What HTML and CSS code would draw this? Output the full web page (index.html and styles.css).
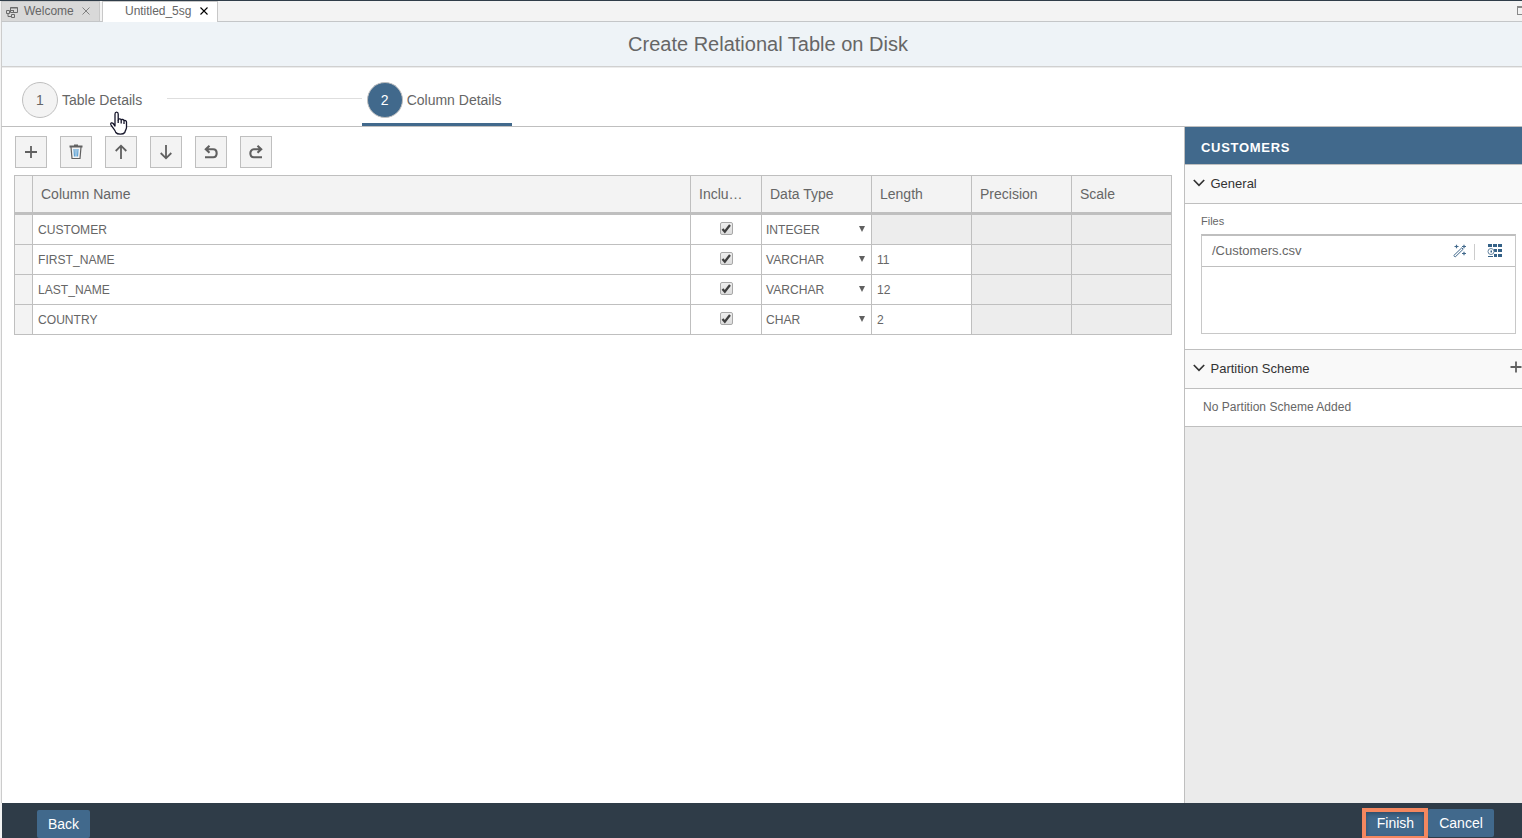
FILE: index.html
```html
<!DOCTYPE html>
<html lang="en">
<head>
<meta charset="utf-8">
<title>Create Relational Table on Disk</title>
<link rel="stylesheet" href="styles.css">
</head>
<body>
<div class="app">
  <nav class="tabs">
    <div class="tab tab-welcome">
      <svg class="tab-icon" width="12" height="12" viewBox="0 0 12 12" fill="none" stroke="#6a6a6a"><path d="M4.500 1.500h7v5h-7zM4.500 2h7M.5 4.500h3v3h-3zM5.500 8.500h3v3h-3zM7.500 4v3M2 8v2.500h3M4 4.500h3.500"/></svg>
      <span class="tab-label">Welcome</span>
      <svg class="tab-close" width="8" height="8" viewBox="0 0 8 8" stroke="#777" stroke-width=".9"><path d="M.5.5l7 7M7.500.5l-7 7"/></svg>
    </div>
    <div class="tab tab-active">
      <span class="tab-label">Untitled_5sg</span>
      <svg class="tab-close" width="8" height="8" viewBox="0 0 8 8" stroke="#000" stroke-width="1.100"><path d="M.5.5l7 7M7.500.5l-7 7"/></svg>
    </div>
    <span class="maximize"></span>
  </nav>
  <header class="title">Create Relational Table on Disk</header>
  <div class="stepper">
    <div class="step"><span class="circle">1</span><span>Table Details</span></div>
    <span class="connector"></span>
    <div class="step step-active"><span class="circle">2</span><span>Column Details</span></div>
    <svg class="pointer" width="20" height="25" viewBox="0 0 20 25" fill="#fff" stroke="#15152a" stroke-width="1.300" stroke-linejoin="round"><path d="M6 15V3c0-2.600 3.200-2.600 3.200 0v6c.2-1.700 3-1.600 3 .3 .4-1.300 2.800-1.100 2.800.8 .6-1 2.500-.6 2.500 1v5.400c0 2-1.500 3-1.700 5-1.700 2.300-7.300 2.200-9 0-.4-2.300-3.700-5.200-4.900-7.800-.8-1.900 1.200-2.300 2.300-1.200z"/><path d="M9.200 9v3M12.200 9.500v3M15 10.500v2.500"/></svg>
  </div>
  <div class="content">
    <main class="editor">
      <div class="toolbar">
        <button class="tool"><svg width="16" height="16" viewBox="0 0 16 16"><path d="M8 2v12M2 8h12"/></svg></button>
        <button class="tool"><svg width="16" height="16" viewBox="0 0 16 16"><path d="M1.500 2.500h13M6 1.300h4"/><path class="thin" d="M3 3l1 11.500h8L13 3"/><path class="thin blue" d="M6 5l.5 7.500M8 5v7.500M10 5l-.5 7.500"/></svg></button>
        <button class="tool"><svg width="16" height="16" viewBox="0 0 16 16"><path d="M8 15V2M2.700 7l5.300-5.300L13.300 7"/></svg></button>
        <button class="tool"><svg width="16" height="16" viewBox="0 0 16 16"><path d="M8 1v13M2.700 9l5.300 5.300L13.300 9"/></svg></button>
        <button class="tool"><svg width="16" height="16" viewBox="0 0 16 16"><path class="bold" d="M6.500 1.800L2.800 5.300l3.700 3.500M3 5.300h7.200c4.600 0 4.600 7.900 0 7.900H2"/></svg></button>
        <button class="tool"><svg width="16" height="16" viewBox="0 0 16 16"><path class="bold" d="M9.500 1.800l3.700 3.500-3.700 3.500M13 5.300H5.800c-4.600 0-4.600 7.900 0 7.900H14"/></svg></button>
      </div>
      <div class="grid">
        <div class="row head"><span></span><span>Column Name</span><span>Inclu…</span><span>Data Type</span><span>Length</span><span>Precision</span><span>Scale</span></div>
        <div class="row"><span class="handle"></span><span>CUSTOMER</span><span class="include"><i class="check"><svg width="11" height="11" viewBox="0 0 11 11"><path d="M1.500 6l2.300 2.700L9 2"/></svg></i></span><span class="type">INTEGER<i class="arrow"></i></span><span class="off"></span><span class="off"></span><span class="off"></span></div>
        <div class="row"><span class="handle"></span><span>FIRST_NAME</span><span class="include"><i class="check"><svg width="11" height="11" viewBox="0 0 11 11"><path d="M1.500 6l2.300 2.700L9 2"/></svg></i></span><span class="type">VARCHAR<i class="arrow"></i></span><span>11</span><span class="off"></span><span class="off"></span></div>
        <div class="row"><span class="handle"></span><span>LAST_NAME</span><span class="include"><i class="check"><svg width="11" height="11" viewBox="0 0 11 11"><path d="M1.500 6l2.300 2.700L9 2"/></svg></i></span><span class="type">VARCHAR<i class="arrow"></i></span><span>12</span><span class="off"></span><span class="off"></span></div>
        <div class="row"><span class="handle"></span><span>COUNTRY</span><span class="include"><i class="check"><svg width="11" height="11" viewBox="0 0 11 11"><path d="M1.500 6l2.300 2.700L9 2"/></svg></i></span><span class="type">CHAR<i class="arrow"></i></span><span>2</span><span class="off"></span><span class="off"></span></div>
      </div>
    </main>
    <aside class="panel">
      <h2 class="panel-title">CUSTOMERS</h2>
      <div class="section"><svg class="chevron" width="12" height="8" viewBox="0 0 12 8"><path d="M.8 1L6 6.300 11.200 1"/></svg>General</div>
      <div class="general">
        <div class="label">Files</div>
        <div class="files">
          <div class="file">
            <span class="file-name">/Customers.csv</span>
            <svg class="wand" width="14" height="14" viewBox="0 0 14 14" fill="none" stroke="#41698c"><path d="M.8 11.500L8.800 3.800l1.400 1.400L2.200 13z"/><path stroke-width="1.200" d="M1.500 2.500h4M3.500.7v3.600M9 2.500h4M11 .7v3.600M9 9.500h4M11 7.700v3.600"/></svg>
            <span class="divider"></span>
            <svg width="15" height="14" viewBox="0 0 15 14" fill="#346187"><path d="M1 0h4v3H1zM6 0h4v3H6zM11 0h4v3h-4zM11 5h4v3h-4zM11 10h4v3h-4zM7 5h3v3H7zM7 10h3v3H7z"/><circle cx="4" cy="7.500" r="3" fill="#fff" stroke="#6685a0"/><path d="M3.500 6.500h1.500v2H3.500zM1 12h5v1H1z"/></svg>
          </div>
        </div>
      </div>
      <div class="section"><svg class="chevron" width="12" height="8" viewBox="0 0 12 8"><path d="M.8 1L6 6.300 11.200 1"/></svg>Partition Scheme<svg class="add" width="12" height="12" viewBox="0 0 12 12"><path d="M6 .5v11M.5 6h11"/></svg></div>
      <div class="empty">No Partition Scheme Added</div>
    </aside>
  </div>
  <footer class="footer">
    <button class="action back">Back</button>
    <div class="highlight"><button class="action finish">Finish</button></div>
    <button class="action cancel">Cancel</button>
  </footer>
</div>
</body>
</html>
```

FILE: styles.css
```css
* { box-sizing: border-box; }
body { margin: 0; background: #f3f3f3; color: #666; font-family: "Liberation Sans", Arial, sans-serif; overflow: hidden; }
button { font-family: inherit; padding: 0; }
svg { display: block; flex: none; }
.app { width: 1522px; height: 838px; display: flex; flex-direction: column; border-top: 1px solid #2f3c48; padding-left: 1px; overflow: hidden; }
.tabs { height: 21px; flex: none; display: flex; border-bottom: 1px solid #c4c6c8; border-left: 1px solid #ccc; background: #f3f3f3; }
.tab { height: 20px; display: flex; align-items: center; font-size: 12px; border-top: 1px solid #c8c8c8; border-right: 1px solid #c8c8c8; }
.tab-label { line-height: 18px; padding-bottom: 1px; }
.tab-close { margin-bottom: 2px; }
.tab-welcome { width: 98px; padding-left: 4px; background: #d9d9d9; }
.tab-welcome .tab-label { margin-left: 6px; width: 58px; }
.tab-active { width: 116px; height: 21px; margin-left: 2px; padding: 0 0 1px 22px; background: #fff; border-left: 1px solid #c8c8c8; }
.tab-active .tab-label { width: 75px; letter-spacing: -.03px; }
.maximize { width: 5px; height: 9px; margin: 5px 0 0 auto; border: 1px solid #888; border-top-width: 2px; border-right: 0; }
.title { height: 45px; flex: none; background: #eef3f7; border-left: 1px solid #ccc; border-bottom: 1px solid #d0d0d0; text-align: center; padding-left: 12px; font-size: 20px; line-height: 44px; }
.stepper { position: relative; height: 60px; flex: none; display: flex; background: #fff; border-left: 1px solid #ccc; border-bottom: 1px solid #bfbfbf; box-shadow: inset 0 1px #ececec; padding-left: 20px; font-size: 14px; }
.step { height: 59px; display: flex; align-items: center; gap: 4px; padding-top: 7px; }
.circle { width: 36px; height: 36px; flex: none; border: 1px solid #bfbfbf; border-radius: 50%; background: #f3f3f3; display: flex; align-items: center; justify-content: center; }
.connector { width: 195px; height: 1px; margin: 31px 0 0 25px; background: #dedede; }
.step-active { width: 150px; gap: 3.500px; padding: 10px 0 0 5px; border-bottom: 3px solid #41698c; white-space: nowrap; }
.step-active .circle { background: #41698c; color: #fff; padding-right: 1px; }
.pointer { position: absolute; left: 107px; top: 44px; z-index: 2; }
.content { flex: 1; display: flex; min-height: 0; }
.editor { width: 1183px; background: #fff; border-left: 1px solid #ccc; padding: 9px 0 0 12px; }
.toolbar { display: flex; gap: 13px; padding-left: 1px; }
.tool { width: 32px; height: 32px; display: flex; align-items: center; justify-content: center; background: #f3f3f3; border: 1px solid #bfbfbf; }
.tool svg { fill: none; stroke: #606060; stroke-width: 1.8; }
.tool .bold { stroke-width: 2.1; }
.tool .thin { stroke-width: 1.2; }
.tool .blue { stroke: #5da2d4; }
.grid { width: 1158px; margin-top: 7px; border: 1px solid #bfbfbf; border-bottom: 0; font-size: 12.1px; }
.row { display: grid; grid-template-columns: 18px 658px 71px 110px 100px 100px 99px; grid-template-rows: 29px; height: 30px; border-bottom: 1px solid #bfbfbf; }
.row > span { border-right: 1px solid #bfbfbf; padding-left: 5px; line-height: 30px; white-space: nowrap; }
.row > span:last-child { border-right: 0; }
.row .handle { background: #f3f3f3; }
.row .off { background: #ededed; }
.grid .head { height: 39px; grid-template-rows: 36px; background: #f3f3f3; border-bottom-width: 3px; font-size: 14px; }
.grid .head > span { padding-left: 8px; line-height: 37px; }
.row .include { display: flex; justify-content: center; padding: 7px 0 0 0; }
.check { width: 13px; height: 13px; border: 1px solid #a8a8a8; border-radius: 2px; background: linear-gradient(#eee, #dcdcdc); }
.check path { fill: none; stroke: #3f3f3f; stroke-width: 2.3; }
.row .type { display: flex; justify-content: space-between; padding: 0 6px 0 4px; }
.arrow { width: 0; height: 0; margin-top: 11px; border: 3px solid transparent; border-top: 6px solid #606060; border-bottom: 0; }
.panel { width: 338px; flex: none; background: #ebebeb; border-left: 1px solid #bfbfbf; }
.panel-title { margin: 0; height: 38px; padding: 3px 0 0 16px; background: #41698c; border-bottom: 1px solid #bfbfbf; color: #fff; font-size: 13px; line-height: 36px; letter-spacing: .7px; }
.section { height: 39px; display: flex; align-items: center; gap: 6px; padding: 0 0 1px 7.500px; background: #f9f9f9; border-bottom: 1px solid #bfbfbf; color: #333; font-size: 13px; }
.chevron { margin-bottom: 1px; fill: none; stroke: #333; stroke-width: 1.7; }
.general { height: 146px; background: #fff; border-bottom: 1px solid #bfbfbf; padding: 10px 6px 0 16px; }
.label { height: 20px; font-size: 11px; line-height: 15px; }
.files { height: 100px; border: 1px solid #c8c8c8; border-top: 2px solid #bfbfbf; }
.file { height: 31px; display: flex; align-items: center; padding: 0 13px 0 10px; border-bottom: 1px solid #bfbfbf; font-size: 13px; }
.file-name { flex: 1; padding-bottom: 2px; }
.divider { width: 1px; height: 16px; margin: 2px 12px 0 7px; background: #ccc; }
.add { margin: 0 0 4px auto; fill: none; stroke: #606060; stroke-width: 1.8; }
.empty { height: 38px; padding-left: 18px; background: #fff; border-bottom: 1px solid #bfbfbf; font-size: 12px; line-height: 36px; letter-spacing: .03px; }
.footer { height: 35px; flex: none; display: flex; align-items: flex-start; background: #2f3c48; margin-left: 1px; padding-left: 35px; overflow: hidden; }
.action { height: 28px; border: 0; border-radius: 2px; background: #41698c; color: #fff; font-size: 14px; }
.back { width: 53px; margin-top: 7px; }
.highlight { width: 66px; height: 32px; margin: 5px 0 0 auto; border: 4px solid #f4875f; display: flex; }
.finish { width: 58px; height: 24px; border-radius: 0; box-shadow: inset 0 2px 4px #2f4b66; padding: 0 0 3px 1px; }
.cancel { width: 66px; margin: 6px 28px 0 0; }
```
